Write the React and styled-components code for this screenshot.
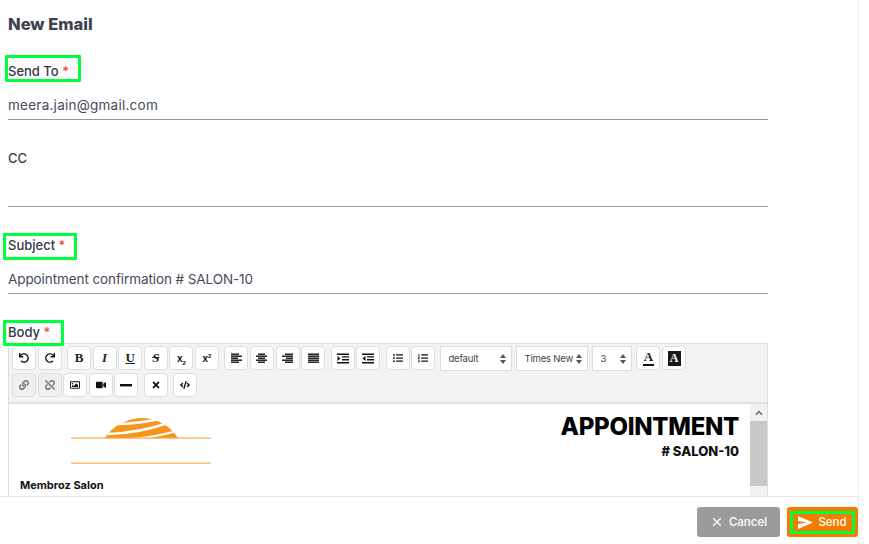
import styled, { createGlobalStyle } from "styled-components";
import {
  FaUndo, FaRedo, FaListUl, FaListOl, FaLink, FaUnlink, FaRegImage, FaVideo, FaTimes, FaCode, FaChevronUp,
} from "react-icons/fa";
import { X } from "lucide-react";

const Global = createGlobalStyle`
  html, body { margin: 0; padding: 0; background: #fff; }
  body { font-family: Inter, "Noto Sans", sans-serif; overflow: hidden; }
  * { box-sizing: border-box; }
`;

const Page = styled.div`
  width: 869px;
  height: 544px;
  display: flex;
`;

const Panel = styled.div`
  width: 859px;
  height: 544px;
  display: flex;
  flex-direction: column;
  border-right: 1px solid #f0f0f0;
`;

const Scroller = styled.div`
  flex: 1;
  min-height: 0;
  overflow: hidden;
  padding: 14px 0 0 8px;
`;

const Heading = styled.h1`
  margin: 0 0 26px;
  height: 20px;
  font-size: 16.5px;
  line-height: 20px;
  font-weight: 800;
  color: #3d4152;
`;

const Field = styled.div`
  width: 760px;
  height: 87px;
`;

const Label = styled.label`
  position: relative;
  display: inline-block;
  height: 20px;
  font-size: 13px;
  line-height: 20px;
  font-weight: 500;
  color: #33384a;
`;

const Req = styled.span`
  color: #f44336;
`;

const Highlight = styled.span`
  position: absolute;
  top: ${(p) => p.$top}px;
  bottom: ${(p) => p.$bottom}px;
  left: ${(p) => p.$left}px;
  right: ${(p) => p.$right}px;
  border: 3px solid #00ff3c;
  border-radius: 1px;
`;

const Value = styled.div`
  margin-top: 9px;
  height: 30px;
  padding-top: 5px;
  font-size: 13.5px;
  line-height: 20px;
  letter-spacing: ${(p) => p.$track || 0}px;
  color: #454a5a;
  border-bottom: 1px solid #9a9a9a;
`;

const Editor = styled.div`
  width: 760px;
  margin-top: 1px;
  border: 1px solid #dedede;
  border-bottom: 0;
`;

const Toolbar = styled.div`
  height: 60px;
  padding: 2px 0 0 3px;
  background: #f3f3f3;
  border-bottom: 2px solid #e0e0e0;
`;

const ToolRow = styled.div`
  display: flex;
  height: 25px;
  margin-bottom: 2px;
`;

const Group = styled.div`
  display: flex;
  gap: 1.6px;
  margin-right: 5.4px;
  &:last-child { margin-right: 0; }
`;

const Tool = styled.div`
  width: 24px;
  height: 24px;
  display: flex;
  align-items: center;
  justify-content: center;
  border: 1px solid #dedede;
  border-radius: 4px;
  background: ${(p) => (p.$off ? "#efefef" : "#fff")};
  color: ${(p) => (p.$off ? "#777" : "#111")};
  font-size: 10px;
`;

const Glyph = styled.span`
  font-family: "Liberation Serif", serif;
  font-size: 13px;
  font-weight: 700;
  font-style: ${(p) => (p.$italic ? "italic" : "normal")};
  text-decoration: ${(p) => p.$deco || "none"};
  color: #222;
`;

const Script = styled.span`
  font-family: "Liberation Sans", sans-serif;
  font-size: 10px;
  font-weight: 700;
  sub, sup { font-size: 6px; line-height: 0; }
`;

const Select = styled.div`
  width: ${(p) => p.$w}px;
  height: 25px;
  margin-right: 4px;
  padding: 0 5px 0 7px;
  display: flex;
  align-items: center;
  justify-content: space-between;
  background: #fff;
  border: 1px solid #dedede;
  font-size: 9.5px;
  letter-spacing: -0.2px;
  color: #444;
`;

const ColorA = styled.span`
  font-family: "Liberation Serif", serif;
  font-weight: 700;
  font-size: 13px;
  line-height: 13px;
  color: #222;
  padding: 0 1px 1px;
  border-bottom: 2px solid #111;
`;

const BackA = styled.span`
  width: 13px;
  height: 15px;
  display: flex;
  align-items: center;
  justify-content: center;
  background: #181818;
  color: #fff;
  font-family: "Liberation Serif", serif;
  font-weight: 700;
  font-size: 12px;
`;

const Sheet = styled.div`
  display: flex;
  height: 100px;
  background: #fff;
`;

const Invoice = styled.div`
  flex: 1;
  padding: 0 11px 0 11px;
`;

const InvoiceHead = styled.div`
  display: flex;
  justify-content: space-between;
  height: 75px;
`;

const LogoBox = styled.div`
  margin: 13px 0 0 51px;
`;

const DocTitle = styled.div`
  padding-top: 8px;
  text-align: right;
`;

const DocName = styled.div`
  font-size: 24px;
  line-height: 30px;
  font-weight: 800;
  letter-spacing: -0.3px;
  color: #000;
`;

const DocNo = styled.div`
  font-size: 13px;
  line-height: 18px;
  font-weight: 800;
  color: #111;
`;

const Company = styled.div`
  font-size: 11px;
  line-height: 13px;
  font-weight: 700;
  color: #111;
`;

const Address = styled.div`
  margin-top: 2px;
  font-size: 9.5px;
  line-height: 13px;
  color: #555;
`;

const Scrollbar = styled.div`
  width: 17px;
  flex: none;
  background: #f1f1f1;
  display: flex;
  flex-direction: column;
`;

const ScrollUp = styled.div`
  height: 17px;
  display: flex;
  align-items: center;
  justify-content: center;
  color: #555;
  font-size: 8px;
`;

const Thumb = styled.div`
  height: 65px;
  background: #c8c8c8;
`;

const Footer = styled.div`
  height: 48px;
  flex: none;
  display: flex;
  justify-content: flex-end;
  gap: 7px;
  padding: 10px 0 0 0;
  border-top: 1px solid #e6e6e6;
  background: #fff;
`;

const Button = styled.button`
  position: relative;
  height: 30px;
  width: ${(p) => p.$w}px;
  padding: 0;
  display: flex;
  align-items: center;
  justify-content: center;
  gap: 5px;
  border: 0;
  border-radius: 3px;
  background: ${(p) => p.$bg};
  color: #fff;
  font-family: inherit;
  font-size: 11.5px;
  font-weight: 500;
`;

const SendMark = styled.span`
  position: absolute;
  inset: 4px 3px 3px 3px;
  border: 3px solid #00ff3c;
`;

const AlignIcon = ({ lines }) => (
  <svg width="11" height="11" viewBox="0 0 11 11">
    {lines.map(([x, w], i) => (
      <rect key={i} x={x} y={i * 2 + 0.5} width={w} height="1.4" fill="#111" />
    ))}
  </svg>
);

const Arrows = () => (
  <svg width="6" height="10" viewBox="0 0 6 10">
    <path d="M3 0 L6 4 H0 Z M3 10 L0 6 H6 Z" fill="#555" />
  </svg>
);

const IndentIcon = ({ flip }) => (
  <svg width="12" height="11" viewBox="0 0 12 11">
    <path d="M0 0.5 H12 V2 H0 Z M0 9 H12 V10.5 H0 Z M5 3.2 H12 V4.6 H5 Z M5 6 H12 V7.4 H5 Z" fill="#111" />
    <path d={flip ? "M3.5 3 V8 L0.5 5.5 Z" : "M0.5 3 V8 L3.5 5.5 Z"} fill="#111" />
  </svg>
);

const Sun = () => (
  <svg width="140" height="48" viewBox="0 0 140 48">
    <path d="M34 21 C41 10 54 1.5 71 1 C87 1 100 10 107 21 Z" fill="#f7941d" />
    <path d="M44 7 Q64 7 86 2.5" fill="none" stroke="#fff" strokeWidth="2.4" />
    <path d="M37 17 Q68 16 97 6" fill="none" stroke="#fff" strokeWidth="2.6" />
    <path d="M62 22 Q84 20 104 14.5" fill="none" stroke="#fff" strokeWidth="2" />
    <rect x="0" y="20.5" width="140" height="1.2" fill="#f9a748" />
    <rect x="0" y="45.5" width="140" height="1.2" fill="#f9a748" />
  </svg>
);

const SendIcon = () => (
  <svg width="15" height="13" viewBox="0 0 15 13">
    <path d="M0 0 L15 6.5 L0 13 V8 L9 6.5 L0 5 Z" fill="#fff" />
  </svg>
);

export default function App() {
  return (
    <Page>
      <Global />
      <Panel>
        <Scroller>
          <Heading>New Email</Heading>
          <Field>
            <Label>
              Send To <Req>*</Req>
              <Highlight $top={-6} $bottom={-1} $left={-3} $right={-12} />
            </Label>
            <Value $track={0.25}>meera.jain@gmail.com</Value>
          </Field>
          <Field>
            <Label>CC</Label>
            <Value />
          </Field>
          <Field>
            <Label>
              Subject <Req>*</Req>
              <Highlight $top={-2} $bottom={-5} $left={-5} $right={-12} />
            </Label>
            <Value $track={-0.09}>Appointment confirmation # SALON-10</Value>
          </Field>
          <Label>
            Body <Req>*</Req>
            <Highlight $top={-2} $bottom={-4} $left={-5} $right={-14} />
          </Label>
          <Editor>
            <Toolbar>
              <ToolRow>
                <Group>
                  <Tool><FaUndo /></Tool>
                  <Tool><FaRedo /></Tool>
                </Group>
                <Group>
                  <Tool><Glyph>B</Glyph></Tool>
                  <Tool><Glyph $italic>I</Glyph></Tool>
                  <Tool><Glyph $deco="underline">U</Glyph></Tool>
                  <Tool><Glyph $italic $deco="line-through">S</Glyph></Tool>
                  <Tool><Script>x<sub>2</sub></Script></Tool>
                  <Tool><Script>x<sup>2</sup></Script></Tool>
                </Group>
                <Group>
                  <Tool><AlignIcon lines={[[0, 8], [0, 11], [0, 7], [0, 11], [0, 8]]} /></Tool>
                  <Tool><AlignIcon lines={[[2, 7], [0, 11], [2, 7], [0, 11], [2, 7]]} /></Tool>
                  <Tool><AlignIcon lines={[[3, 8], [0, 11], [4, 7], [0, 11], [3, 8]]} /></Tool>
                  <Tool><AlignIcon lines={[[0, 11], [0, 11], [0, 11], [0, 11], [0, 11]]} /></Tool>
                </Group>
                <Group>
                  <Tool><IndentIcon /></Tool>
                  <Tool><IndentIcon flip /></Tool>
                </Group>
                <Group>
                  <Tool><FaListUl /></Tool>
                  <Tool><FaListOl /></Tool>
                </Group>
                <Select $w={72}>default<Arrows /></Select>
                <Select $w={72}>Times New<Arrows /></Select>
                <Select $w={40}>3<Arrows /></Select>
                <Group>
                  <Tool><ColorA>A</ColorA></Tool>
                  <Tool><BackA>A</BackA></Tool>
                </Group>
              </ToolRow>
              <ToolRow>
                <Group>
                  <Tool $off><FaLink /></Tool>
                  <Tool $off><FaUnlink /></Tool>
                  <Tool><FaRegImage /></Tool>
                  <Tool><FaVideo /></Tool>
                  <Tool>
                    <svg width="12" height="3" viewBox="0 0 12 3"><rect width="12" height="2.4" fill="#111" /></svg>
                  </Tool>
                </Group>
                <Group>
                  <Tool><FaTimes /></Tool>
                </Group>
                <Group>
                  <Tool><FaCode /></Tool>
                </Group>
              </ToolRow>
            </Toolbar>
            <Sheet>
              <Invoice>
                <InvoiceHead>
                  <LogoBox><Sun /></LogoBox>
                  <DocTitle>
                    <DocName>APPOINTMENT</DocName>
                    <DocNo># SALON-10</DocNo>
                  </DocTitle>
                </InvoiceHead>
                <Company>Membroz Salon</Company>
                <Address>Ahmedabad, Gujarat, India 380015</Address>
              </Invoice>
              <Scrollbar>
                <ScrollUp><FaChevronUp /></ScrollUp>
                <Thumb />
              </Scrollbar>
            </Sheet>
          </Editor>
        </Scroller>
        <Footer>
          <Button $w={83} $bg="#9b9b9b"><X size={14} />Cancel</Button>
          <Button $w={71} $bg="#f57c00">
            <SendIcon />Send
            <SendMark />
          </Button>
        </Footer>
      </Panel>
    </Page>
  );
}
